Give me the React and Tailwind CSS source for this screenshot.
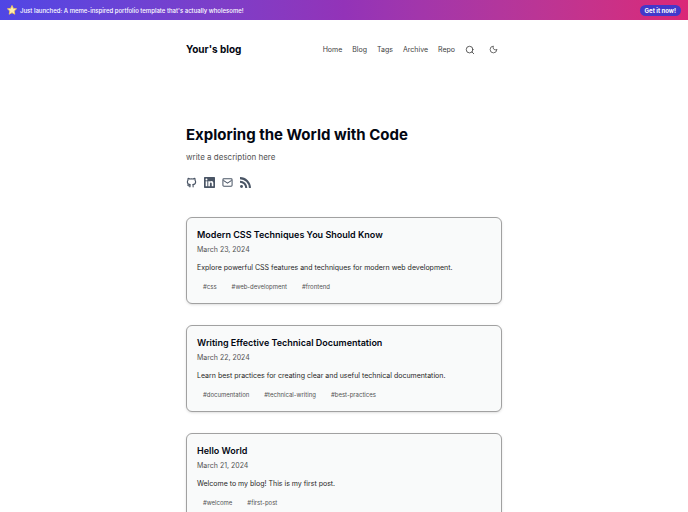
import { Moon, Search } from 'lucide-react';

const navLinks = ['Home', 'Blog', 'Tags', 'Archive', 'Repo'];

const posts = [
    {
        title: 'Modern CSS Techniques You Should Know',
        date: 'March 23, 2024',
        summary: 'Explore powerful CSS features and techniques for modern web development.',
        tags: ['css', 'web-development', 'frontend'],
    },
    {
        title: 'Writing Effective Technical Documentation',
        date: 'March 22, 2024',
        summary: 'Learn best practices for creating clear and useful technical documentation.',
        tags: ['documentation', 'technical-writing', 'best-practices'],
    },
    {
        title: 'Hello World',
        date: 'March 21, 2024',
        summary: 'Welcome to my blog! This is my first post.',
        tags: ['welcome', 'first-post'],
    },
];

const StarIcon = () => (
    <svg viewBox="0 0 24 24" className="size-[10px]" aria-hidden="true">
        <path
            d="M12 1l3.3 7.2 7.7.9-5.7 5.3 1.5 7.8L12 18.4l-6.8 3.8 1.5-7.8L1 9.1l7.7-.9z"
            fill="#fdf0b0"
            stroke="#f3c65c"
            strokeWidth="2"
            strokeLinejoin="round"
        />
    </svg>
);

const GithubIcon = () => (
    <svg viewBox="0 0 24 24" className="size-[11px]" fill="none" stroke="currentColor" strokeWidth="2.5" strokeLinecap="round" strokeLinejoin="round" aria-hidden="true">
        <path d="M8.5 21.5v-3c0-.8.2-1.3.7-1.8C5.5 16.2 3 14.6 3 10.8c0-1.6.5-2.9 1.4-3.9-.3-1.2-.2-2.6.2-3.9 1.5.1 2.800.7 3.900 1.500a13 13 0 0 1 7 0c1.100-.8 2.400-1.400 3.900-1.500.4 1.300.5 2.700.2 3.900.9 1 1.400 2.300 1.400 3.900 0 3.800-2.500 5.400-6.200 5.900.5.5.7 1 .7 1.800v3" />
        <path d="M8.5 19.5c-2.5.7-3.8-.4-5-2" />
    </svg>
);

const LinkedinIcon = () => (
    <svg viewBox="0 0 24 24" className="size-[11px]" fill="currentColor" aria-hidden="true">
        <path
            fillRule="evenodd"
            d="M1.5 0h21A1.5 1.5 0 0 1 24 1.5v21a1.5 1.5 0 0 1-1.5 1.5h-21A1.5 1.5 0 0 1 0 22.5v-21A1.5 1.5 0 0 1 1.5 0zM3.7 9v11.400h3.500V9zM5.400 3.300a2.100 2.100 0 1 0 0 4.200 2.100 2.100 0 0 0 0-4.200zM9.400 9v11.400h3.500v-5.700c0-1.500.4-2.900 2.200-2.900s1.800 1.700 1.800 3v5.600h3.500v-6.300c0-3.100-.7-5.400-4.200-5.400-1.700 0-2.900.9-3.300 1.800V9z"
        />
    </svg>
);

const MailIcon = () => (
    <svg viewBox="0 0 24 24" className="size-[11px]" fill="none" stroke="currentColor" strokeWidth="2.2" strokeLinejoin="round" aria-hidden="true">
        <rect x="2" y="4" width="20" height="16" rx="2" />
        <path d="M3 7.5l9 6 9-6" />
    </svg>
);

const RssIcon = () => (
    <svg viewBox="0 0 24 24" className="size-[11px]" fill="none" stroke="currentColor" strokeWidth="4.5" aria-hidden="true">
        <circle cx="3.3" cy="20.7" r="3.2" fill="currentColor" stroke="none" />
        <path d="M0 10.3A13.7 13.7 0 0 1 13.7 24M0 2.4A21.6 21.6 0 0 1 21.6 24" />
    </svg>
);

const Banner = () => (
    <div className="flex h-5 items-center justify-between bg-linear-to-r from-[#4f46e5] via-[#9333b8] to-[#db2777] px-[7px] text-[6px] font-medium text-white">
        <p className="flex items-center gap-[3px]">
            <StarIcon />
            Just launched: A meme-inspired portfolio template that's actually wholesome!
        </p>
        <a href="#get" className="rounded-full bg-[#4338ca] px-[5px] leading-[11px] font-bold">
            Get it now!
        </a>
    </div>
);

const Header = () => (
    <header className="flex h-[59px] items-center justify-between">
        <a href="#home" className="text-[10px] font-bold text-gray-950">Your's blog</a>
        <nav className="flex items-center gap-[10px] text-[7px] leading-[10px] text-neutral-700">
            {navLinks.map((link) => (
                <a key={link} href={`#${link.toLowerCase()}`}>{link}</a>
            ))}
            <button type="button" aria-label="Search">
                <Search className="size-[10px]" />
            </button>
            <button type="button" aria-label="Toggle dark mode" className="px-1">
                <Moon className="size-[9px]" />
            </button>
        </nav>
    </header>
);

const PostCard = ({ post }) => (
    <article className="rounded-[6px] border border-neutral-400 bg-[#f9fafa] px-[10px] pt-[10px] pb-[11px] shadow-sm">
        <h2 className="text-[9px] leading-[14px] font-semibold text-gray-950">
            <a href="#post">{post.title}</a>
        </h2>
        <time className="mt-[3px] block text-[7px] leading-[10px] text-neutral-600">{post.date}</time>
        <p className="mt-[7px] text-[7px] leading-[12px] text-neutral-800">{post.summary}</p>
        <ul className="mt-2 flex gap-[3px] text-[6px] leading-[10px] text-neutral-600">
            {post.tags.map((tag) => (
                <li key={tag} className="px-[6px]">
                    <a href={`#${tag}`}>#{tag}</a>
                </li>
            ))}
        </ul>
    </article>
);

export default function App() {
    return (
        <div className="min-h-screen bg-white font-['Inter',sans-serif]">
            <Banner />
            <div className="mx-auto w-full max-w-[316px]">
                <Header />
                <main className="pt-[43px] pb-10">
                    <h1 className="text-[15px] leading-[26px] font-bold text-gray-950">Exploring the World with Code</h1>
                    <p className="mt-[3px] text-[8px] leading-[12px] text-neutral-600">write a description here</p>
                    <div className="mt-[14px] flex items-center gap-[7px] text-gray-600">
                        <a href="#github" aria-label="GitHub"><GithubIcon /></a>
                        <a href="#linkedin" aria-label="LinkedIn"><LinkedinIcon /></a>
                        <a href="#mail" aria-label="Email"><MailIcon /></a>
                        <a href="#rss" aria-label="RSS"><RssIcon /></a>
                    </div>
                    <section className="mt-[29px] flex flex-col gap-[21px]">
                        {posts.map((post) => (
                            <PostCard key={post.title} post={post} />
                        ))}
                    </section>
                </main>
            </div>
        </div>
    );
}
